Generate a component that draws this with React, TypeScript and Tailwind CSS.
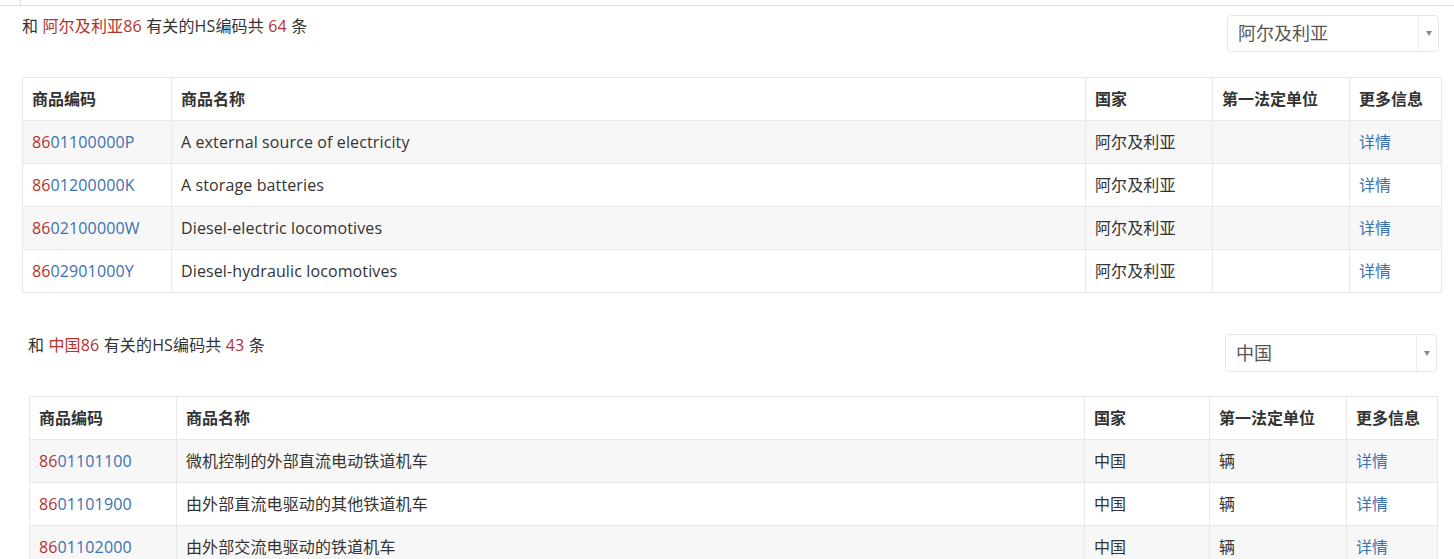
const sections = [
  {
    country: "阿尔及利亚",
    total: 64,
    wrap: "ml-[22px] w-[1419px] pt-[9px]",
    selectBox: "mr-[2px] h-[37px]",
    tableBox: "mt-[25px] w-[1419px]",
    cols: [149, 914, 127, 137, 92],
    rows: [
      { code: "01100000P", name: "A external source of electricity", unit: "" },
      { code: "01200000K", name: "A storage batteries", unit: "" },
      { code: "02100000W", name: "Diesel-electric locomotives", unit: "" },
      { code: "02901000Y", name: "Diesel-hydraulic locomotives", unit: "" },
    ],
  },
  {
    country: "中国",
    total: 43,
    wrap: "ml-[28px] w-[1409px] mt-[41px]",
    selectBox: "mr-0 h-[38px]",
    tableBox: "mt-[24px] ml-[1px] w-[1408px]",
    cols: [147, 908, 125, 137, 91],
    rows: [
      { code: "01101100", name: "微机控制的外部直流电动铁道机车", unit: "辆" },
      { code: "01101900", name: "由外部直流电驱动的其他铁道机车", unit: "辆" },
      { code: "01102000", name: "由外部交流电驱动的铁道机车", unit: "辆" },
    ],
  },
];

const headers = ["商品编码", "商品名称", "国家", "第一法定单位", "更多信息"];

function CountrySelect({ value, className }: { value: string; className: string }) {
  return (
    <div className={`flex w-[212px] items-stretch rounded-[4px] border border-[#e6e6e6] bg-white ${className}`}>
      <div className="flex flex-1 items-center pl-[10px] text-[18px] text-[#555]">{value}</div>
      <div className="flex w-[20px] items-center justify-center border-l border-[#eeeeee]">
        <span className="block h-0 w-0 border-x-[3px] border-t-[5px] border-x-transparent border-t-[#8a8a8a]" />
      </div>
    </div>
  );
}

export default function App() {
  return (
    <div className="min-h-screen bg-white text-[16px] text-[#333] [font-family:'Open_Sans','Noto_Sans_CJK_SC',sans-serif]">
      {/* top rule */}
      <div className="h-[6px] border-b border-[#dddddd]">
        <div className="h-full w-[21px] border-r border-[#dddddd]" />
      </div>

      {sections.map((s) => (
        <section key={s.country} className={s.wrap}>
          <div className="flex items-start justify-between">
            <p className="leading-[22px] tracking-[0.15px]">
              和 <span className="text-[#b5312e]">{s.country}86</span> 有关的HS编码共{" "}
              <span className="text-[#b5312e]">{s.total}</span> 条
            </p>
            <CountrySelect value={s.country} className={s.selectBox} />
          </div>

          <table className={`table-fixed border-collapse border border-[#e8e8e8] ${s.tableBox}`}>
            <colgroup>
              {s.cols.map((w, i) => (
                <col key={i} style={{ width: w }} />
              ))}
            </colgroup>
            <thead>
              <tr className="h-[43px] bg-white">
                {headers.map((h) => (
                  <th key={h} className="border border-[#e8e8e8] pl-[9px] text-left align-middle font-bold">
                    {h}
                  </th>
                ))}
              </tr>
            </thead>
            <tbody>
              {s.rows.map((r, i) => (
                <tr key={r.code} className={`h-[43px] tracking-[0.12px] ${i % 2 === 0 ? "bg-[#f7f7f7]" : "bg-white"}`}>
                  <td className="border border-[#e8e8e8] pl-[9px]">
                    <span className="text-[#b5312e]">86</span>
                    <span className="text-[#3a72b0]">{r.code}</span>
                  </td>
                  <td className="border border-[#e8e8e8] pl-[9px]">{r.name}</td>
                  <td className="border border-[#e8e8e8] pl-[9px]">{s.country}</td>
                  <td className="border border-[#e8e8e8] pl-[9px]">{r.unit}</td>
                  <td className="border border-[#e8e8e8] pl-[9px]">
                    <a className="text-[#3a72b0]">详情</a>
                  </td>
                </tr>
              ))}
            </tbody>
          </table>
        </section>
      ))}
    </div>
  );
}
